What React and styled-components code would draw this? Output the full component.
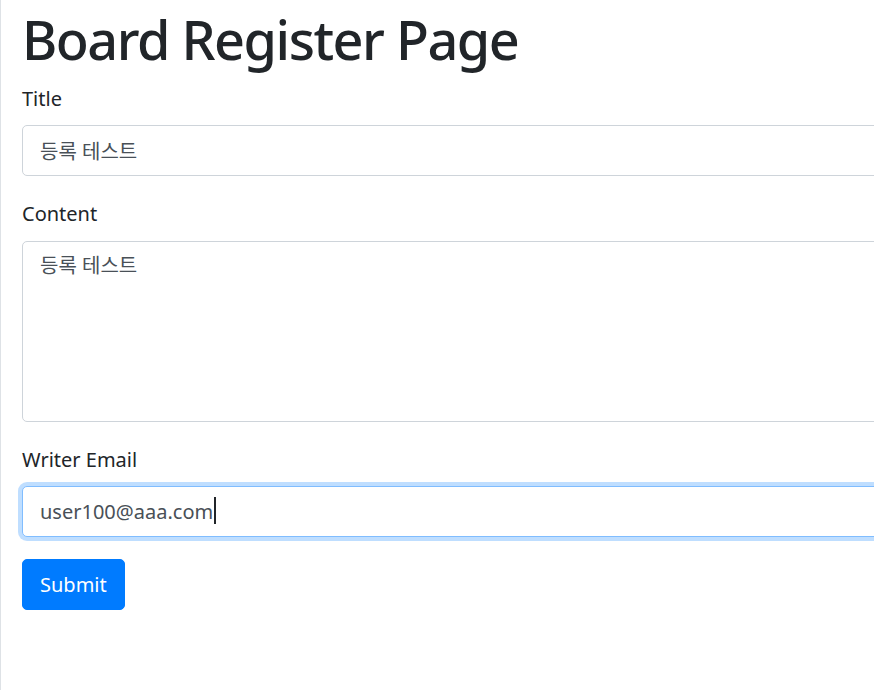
import React from 'react'
import { styled, createGlobalStyle } from 'styled-components'

const GlobalStyle = createGlobalStyle`
  html, body {
    margin: 0;
    padding: 0;
    overflow: hidden;
    background: #fff;
  }
  body {
    font-family: "Noto Sans", "Noto Sans CJK KR", sans-serif;
    font-size: 20px;
    line-height: 1.5;
    color: #212529;
  }
`;

const Page = styled.div`
  width: 1150px;
  min-height: 100vh;
  box-sizing: border-box;
  border-left: 1px solid #dee2e6;
  padding: 7px 0 0 21px;
`;

const Heading = styled.h1`
  margin: 0 0 11px;
  font-size: 54px;
  font-weight: 500;
  line-height: 1.2;
  letter-spacing: -1.5px;
  color: #212529;
`;

const FormGroup = styled.div`
  margin-bottom: 22px;
`;

const Label = styled.label`
  display: inline-block;
  margin-bottom: 10.5px;
  line-height: 32px;
`;

const fieldStyle = `
  display: block;
  width: 100%;
  box-sizing: border-box;
  padding: 8px 17px;
  font-family: "Noto Sans", "Noto Sans CJK KR", sans-serif;
  font-size: 20px;
  line-height: 32px;
  color: #495057;
  background: #fff;
  border: 1px solid #ced4da;
  border-radius: 5px;
  outline: none;
`;

const Input = styled.input`
  ${fieldStyle}
  height: 51px;
  border-color: ${p => (p.$focused ? '#80bdff' : '#ced4da')};
  box-shadow: ${p => (p.$focused ? '0 0 0 4px rgba(0, 123, 255, 0.25)' : 'none')};
`;

const TextArea = styled.textarea`
  ${fieldStyle}
  height: 181px;
  resize: none;
`;

const FieldWrap = styled.div`
  position: relative;
`;

/* text caret drawn over the focused email field */
const Caret = styled.span`
  position: absolute;
  left: 192px;
  top: 11px;
  width: 2px;
  height: 27px;
  background: #212529;
  pointer-events: none;
`;

const SubmitButton = styled.button`
  height: 51px;
  padding: 8px 17px;
  font-family: "Noto Sans", "Noto Sans CJK KR", sans-serif;
  font-size: 20px;
  line-height: 32px;
  color: #fff;
  background: #007bff;
  border: 1px solid #007bff;
  border-radius: 5px;
  cursor: pointer;
`;

const App = () => {
  return (
    <>
      <GlobalStyle />
      <Page>
        <Heading>Board Register Page</Heading>
        <form onSubmit={e => e.preventDefault()}>
          <FormGroup>
            <Label>Title</Label>
            <Input type="text" defaultValue="등록 테스트" />
          </FormGroup>
          <FormGroup>
            <Label>Content</Label>
            <TextArea defaultValue="등록 테스트" />
          </FormGroup>
          <FormGroup>
            <Label>Writer Email</Label>
            <FieldWrap>
              <Input type="email" defaultValue="user100@aaa.com" $focused />
              <Caret />
            </FieldWrap>
          </FormGroup>
          <SubmitButton type="submit">Submit</SubmitButton>
        </form>
      </Page>
    </>
  );
};

export default App;
